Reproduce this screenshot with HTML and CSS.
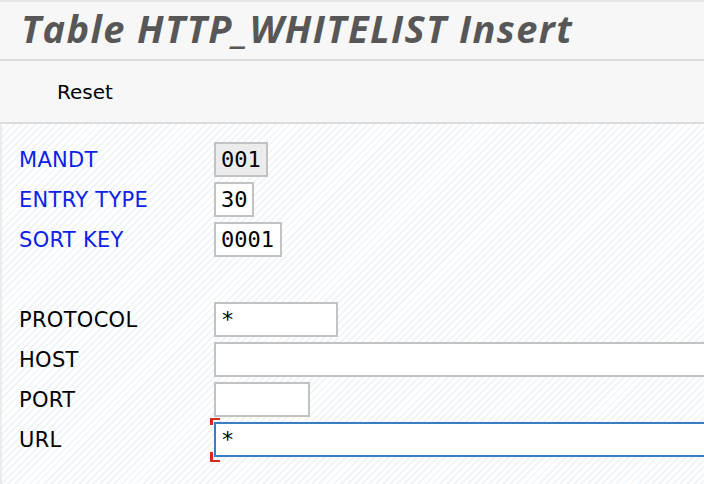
FILE: index.html
```html
<!DOCTYPE html>
<html lang="en">
<head>
    <meta charset="UTF-8">
    <meta name="viewport" content="width=device-width, initial-scale=1.0">
    <title>Table HTTP_WHITELIST Insert</title>
    <link rel="stylesheet" href="styles.css">
</head>
<body>
    <div class="page">
        <div class="title-bar">
            <h1>Table HTTP_WHITELIST Insert</h1>
        </div>
        <div class="toolbar">
            <button class="tool-btn">Reset</button>
        </div>
        <div class="content">
            <div class="form">
                <div class="row">
                    <label class="key">MANDT</label>
                    <input class="field w3 disabled" type="text" value="001" readonly>
                </div>
                <div class="row">
                    <label class="key">ENTRY TYPE</label>
                    <input class="field w2" type="text" value="30">
                </div>
                <div class="row">
                    <label class="key">SORT KEY</label>
                    <input class="field w4" type="text" value="0001">
                </div>
                <div class="row"></div>
                <div class="row">
                    <label>PROTOCOL</label>
                    <input class="field w-protocol" type="text" value="*">
                </div>
                <div class="row">
                    <label>HOST</label>
                    <input class="field w-long" type="text" value="">
                </div>
                <div class="row">
                    <label>PORT</label>
                    <input class="field w-port" type="text" value="">
                </div>
                <div class="row">
                    <label>URL</label>
                    <div class="focus-wrap">
                        <span class="mark mark-top"></span>
                        <span class="mark mark-bottom"></span>
                        <input class="field w-long focused" type="text" value="*">
                    </div>
                </div>
            </div>
        </div>
    </div>
</body>
</html>
```

FILE: styles.css
```css
* {
    box-sizing: border-box;
    margin: 0;
    padding: 0;
}

html, body {
    height: 100%;
    overflow: hidden;
}

body {
    font-family: "DejaVu Sans", sans-serif;
    background-color: #e6e6e6;
}

.page {
    height: 100%;
    padding-top: 2px;
    display: flex;
    flex-direction: column;
}

.title-bar {
    height: 59px;
    padding-left: 21px;
    background-color: #f7f7f7;
    border-bottom: 2px solid #dcdcdc;
}

h1 {
    font-family: "Open Sans", sans-serif;
    font-style: italic;
    font-weight: 700;
    font-size: 38px;
    line-height: 52px;
    letter-spacing: 1.4px;
    color: #575757;
}

.toolbar {
    height: 63px;
    padding-left: 57px;
    display: flex;
    align-items: center;
    background-color: #f7f7f7;
    border-bottom: 2px solid #dcdcdc;
}

.tool-btn {
    border: none;
    background: none;
    font-family: "DejaVu Sans", sans-serif;
    font-size: 20px;
    color: #000;
    cursor: pointer;
}

.content {
    flex: 1;
    border-left: 2px solid #ececec;
    padding: 18px 0 0 17px;
    background-color: #fff;
    background-image: repeating-linear-gradient(135deg, #ffffff 0, #ffffff 3px, #f0f5fa 3px, #f0f5fa 5px);
}

.form {
    display: flex;
    flex-direction: column;
    gap: 5px;
}

.row {
    height: 35px;
    display: flex;
    align-items: center;
}

.row label {
    width: 195px;
    flex-shrink: 0;
    font-size: 21px;
    letter-spacing: 0.3px;
    color: #000;
}

.row label.key {
    color: #0b22e6;
}

.field {
    height: 35px;
    border: 2px solid #c2c2c2;
    background-color: #fff;
    padding: 0 5px;
    font-family: "DejaVu Sans Mono", monospace;
    font-size: 22px;
    color: #000;
    outline: none;
}

.field.disabled {
    background-color: #ececec;
}

.w2 { width: 40px; }
.w3 { width: 54px; }
.w4 { width: 68px; }
.w-protocol { width: 124px; }
.w-port { width: 96px; }

.w-long {
    flex: 1;
    min-width: 0;
    border-right: none;
}

.focus-wrap {
    position: relative;
    flex: 1;
    display: flex;
}

.field.focused {
    border-color: #3a7dc2;
}

.mark {
    position: absolute;
    left: -4px;
    width: 10px;
    height: 7px;
    border-left: 3px solid #d62a1e;
}

.mark-top {
    top: -4px;
    border-top: 2px solid #d62a1e;
}

.mark-bottom {
    bottom: -5px;
    height: 10px;
    border-bottom: 2px solid #d62a1e;
}
```
